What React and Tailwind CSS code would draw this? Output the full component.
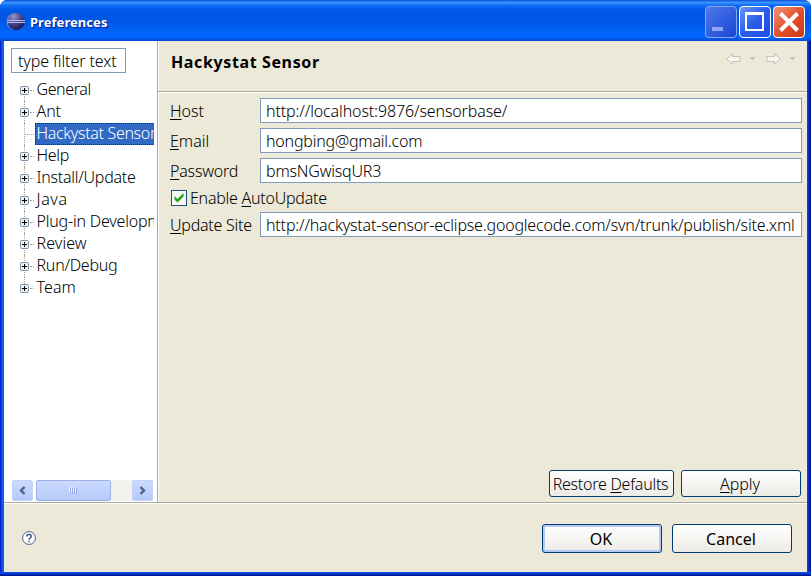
import React from 'react';

const tree = [
  ['General', 'tracking-[-0.4px]'],
  ['Ant', 'tracking-[-0.1px]'],
  ['Hackystat Sensor', 'tracking-[-0.33px]'],
  ['Help', 'tracking-[-0.3px]'],
  ['Install/Update', 'tracking-[-0.25px]'],
  ['Java', 'tracking-[0.6px]'],
  ['Plug-in Developm', 'tracking-[-0.2px]'],
  ['Review', 'tracking-[0.1px]'],
  ['Run/Debug', 'tracking-[-0.25px]'],
  ['Team', 'tracking-[0.1px]'],
];

function EclipseLogo() {
  return (
    <svg width="20" height="20" viewBox="0 0 20 20" className="shrink-0">
      <defs>
        <radialGradient id="orb" cx="0.35" cy="0.2" r="0.85">
          <stop offset="0" stopColor="#9a96c8" />
          <stop offset="0.5" stopColor="#4a4590" />
          <stop offset="1" stopColor="#15124f" />
        </radialGradient>
      </defs>
      <circle cx="9.200" cy="9.500" r="8.6" fill="#7f86d6" />
      <circle cx="10.2" cy="9.500" r="8.6" fill="url(#orb)" />
      <path d="M1.5 8.5h17.4M1.2 10.5h17.8" stroke="#b9bdea" strokeWidth="1" />
    </svg>
  );
}

function CaptionButton({ tone, children }) {
  return (
    <span className={`flex h-8 w-8 items-center justify-center rounded-[4px] border ${tone}`}>
      <svg width="30" height="30" viewBox="0 0 30 30">{children}</svg>
    </span>
  );
}

function Expander() {
  return (
    <svg width="9" height="9" viewBox="0 0 9 9" className="relative z-10">
      <rect x="0.5" y="0.5" width="8" height="8" rx="1" fill="#efede6" stroke="#7b92ad" />
      <path d="M2 4.5h5M4.5 2v5" stroke="#000" />
    </svg>
  );
}

function TreeRow({ name, spacing, index }) {
  const selected = index === 2;
  const last = index === tree.length - 1;
  return (
    <li className="flex h-[22px] items-center pl-4">
      <span className="relative flex h-[22px] w-[15px] shrink-0 items-center">
        <span
          className={`absolute left-1 w-px border-l border-dotted border-[#a6a394] ${index === 0 ? 'top-[11px] h-[11px]' : last ? 'top-0 h-[11px]' : 'top-0 h-[22px]'}`}
        />
        {!selected && <Expander />}
        <span className={`mt-px h-px border-t border-dotted border-[#a6a394] ${selected ? 'ml-1 w-[10px]' : 'ml-px w-1'}`} />
      </span>
      <span
        className={`flex h-[22px] flex-1 items-center overflow-hidden whitespace-pre pb-[2px] ${spacing} ${selected ? 'border border-r-0 border-dotted border-[#1c2a44] bg-[#316ac5] pl-[0.5px] text-white' : 'pl-[1.5px]'}`}
      >
        {name}
      </span>
    </li>
  );
}

function Field({ label, value, labelClass, valueClass, gap }) {
  return (
    <div className={`flex h-[25px] items-center ${gap}`}>
      <label className={`w-[90px] shrink-0 whitespace-nowrap ${labelClass}`}>
        <u className="underline underline-offset-2">{label[0]}</u>
        {label.slice(1)}
      </label>
      <div className={`flex h-[25px] min-w-0 flex-1 items-center whitespace-nowrap border border-[#7f9db9] bg-white pl-[5px] ${valueClass}`}>
        {value}
      </div>
    </div>
  );
}

function ScrollButton({ d }) {
  return (
    <span className="flex h-[21px] w-[21px] items-center justify-center rounded-[2px] border border-[#c3d2f8] bg-gradient-to-b from-[#cbdafd] to-[#b5c9fa]">
      <svg width="9" height="9" viewBox="0 0 9 9">
        <path d={d} fill="none" stroke="#4d6185" strokeWidth="2.400" />
      </svg>
    </span>
  );
}

const button =
  'flex items-center justify-center whitespace-nowrap rounded-[3px] border border-[#003c74] bg-gradient-to-b from-white to-[#ecebe6]';

export default function App() {
  return (
    <div className="flex h-[576px] w-[811px] flex-col overflow-hidden rounded-t-[7px] bg-[linear-gradient(90deg,#0019cf_0px,#0831d9_1px,#166aee_3px,#0855dd_4px,#0855dd_807px,#0831d9_808px,#001ea0_810px,#00138c_811px)] font-['Noto_Sans','Open_Sans',sans-serif] text-[16px] font-light leading-[20px] text-black">
      <header className="flex h-[41px] shrink-0 items-center bg-[linear-gradient(180deg,#0a4fd6_0%,#3a93ff_6%,#0a6af4_14%,#0058e6_25%,#0056e4_50%,#0064fa_78%,#0066ff_90%,#0049cf_100%)] pl-[6px] pr-[6px] pt-[3px]">
        <EclipseLogo />
        <h1 className="ml-1 flex-1 font-['Noto_Sans',sans-serif] text-[13px] font-bold tracking-[0.05px] text-white [text-shadow:1px_1px_1px_#0a1883]">
          Preferences
        </h1>
        <div className="flex gap-[2px]">
          <CaptionButton tone="border-[#86a6ee] bg-gradient-to-br from-[#4f78ea] to-[#1745d4]">
            <path d="M6 20h11v4H6z" fill="#8ca6f3" />
          </CaptionButton>
          <CaptionButton tone="border-white bg-gradient-to-br from-[#6d93f5] via-[#2a5cec] to-[#1a4ee0]">
            <path d="M6 7h17v16h-17z" fill="none" stroke="#fff" strokeWidth="2" />
            <path d="M5 6.500h19" stroke="#fff" strokeWidth="3" />
          </CaptionButton>
          <CaptionButton tone="border-white bg-gradient-to-br from-[#ee9377] via-[#e2512c] to-[#c93a12]">
            <path d="M6.500 6.500l17 17M23.500 6.500l-17 17" stroke="#fff" strokeWidth="4" />
          </CaptionButton>
        </div>
      </header>

      <div className="mx-1 flex h-[531px] shrink-0 flex-col bg-[#ece9d8]">
        <main className="flex h-[461px] shrink-0">
          <aside className="flex w-[153px] shrink-0 flex-col overflow-hidden bg-white pr-[3px]">
            <div className="ml-[7px] mt-[7px] flex h-[25px] w-[115px] shrink-0 items-center whitespace-nowrap border border-[#7f9db9] pl-[6px] tracking-[-0.1px]">
              type filter text
            </div>
            <ul className="mt-[6px] flex-1">
              {tree.map(([name, spacing], i) => (
                <TreeRow key={name} name={name} spacing={spacing} index={i} />
              ))}
            </ul>
            <div className="mb-px ml-2 mr-px flex h-[21px] justify-between bg-[#f3f1ec]">
              <div className="flex gap-[3px] bg-white">
                <ScrollButton d="M6.500 1L3 4.500L6.500 8" />
                <span className="flex h-[21px] w-[75px] items-center justify-center gap-px rounded-[2px] border border-[#98b1e9] bg-gradient-to-b from-[#cbdafd] to-[#b5c9fa]">
                  {[0, 1, 2, 3].map((i) => (
                    <i key={i} className="h-[6px] w-px bg-[#8da5e6] shadow-[-1px_-1px_0_#eef4fe]" />
                  ))}
                </span>
              </div>
              <ScrollButton d="M2.500 1L6 4.500L2.500 8" />
            </div>
          </aside>

          <section className="flex min-w-0 flex-1 flex-col border-l border-[#aca899] shadow-[inset_1px_0_0_#fff]">
            <div className="flex h-[51px] shrink-0 items-center justify-between border-b border-[#aca899] pl-[13px] pr-[11px] shadow-[0_1px_0_#fff]">
              <h2 className="mt-[-8px] text-[16px] font-bold tracking-[0.62px]">Hackystat Sensor</h2>
              <svg width="70" height="14" viewBox="0 0 70 14" className="mt-[-14px]">
                <g fill="#f6f5ef" stroke="#c4c1b5">
                  <path d="M0.800 7L6.500 1.500V4.500H14V9.500H6.500V12.500z" />
                  <path d="M54.200 7L48.500 1.500V4.500H41V9.500H48.500V12.500z" />
                </g>
                <path d="M23.500 5h6l-3 3.500zM63.500 5h6l-3 3.500z" fill="#c4c1b5" />
              </svg>
            </div>
            <form className="flex flex-1 flex-col pl-3 pr-[5px] pt-[6px]">
              <Field label="Host" value="http://localhost:9876/sensorbase/" gap="mb-[5px]" labelClass="" valueClass="tracking-[-0.12px]" />
              <Field label="Email" value="hongbing@gmail.com" gap="mb-[5px]" labelClass="" valueClass="tracking-[-0.2px]" />
              <Field label="Password" value="bmsNGwisqUR3" gap="" labelClass="tracking-[-0.2px]" valueClass="tracking-[-0.2px]" />
              <label className="flex h-[29px] items-center whitespace-nowrap tracking-[-0.25px]">
                <svg width="16" height="16" viewBox="0 0 16 16" className="ml-px mr-[3px]">
                  <rect x="0.500" y="0.500" width="15" height="15" fill="#f7f7f4" stroke="#1c5180" />
                  <path d="M3.500 6V9.500L6.500 12.500L12.500 6.500V3L6.500 9z" fill="#21a121" />
                </svg>
                <span>
                  Enable <u className="underline underline-offset-2">A</u>utoUpdate
                </span>
              </label>
              <Field
                label="Update Site"
                value="http://hackystat-sensor-eclipse.googlecode.com/svn/trunk/publish/site.xml"
                gap=""
                labelClass="tracking-[-0.25px]"
                valueClass="tracking-[-0.18px]"
              />
              <div className="mb-[5px] mt-auto flex justify-end gap-[7px] pr-px">
                <button type="button" className={`${button} h-[27px] w-[125px] pr-[2px] tracking-[-0.25px]`}>
                  <span>
                    Restore <u className="underline underline-offset-2">D</u>efaults
                  </span>
                </button>
                <button type="button" className={`${button} h-[27px] w-[120px] pr-[2px]`}>
                  <span>
                    <u className="underline underline-offset-2">A</u>pply
                  </span>
                </button>
              </div>
            </form>
          </section>
        </main>

        <footer className="flex h-[70px] items-center border-t border-[#aca899] pl-[18px] pr-[15px] shadow-[inset_0_1px_0_#fff]">
          <svg width="14" height="14" viewBox="0 0 14 14">
            <circle cx="7" cy="7" r="6.400" fill="#fff" stroke="#4d5c8d" />
            <path d="M4.800 5.400C4.800 2.700 9.300 2.700 9.300 5.300C9.300 6.900 7.100 6.800 7.100 8.700M7.100 9.800V11.300" fill="none" stroke="#4d5c8d" strokeWidth="1.600" />
          </svg>
          <div className="ml-auto mt-px flex gap-[10px] font-normal">
            <button type="button" className={`${button} h-[29px] w-[120px] pr-[2px] pt-px shadow-[inset_0_0_0_2px_#b3c9f3]`}>OK</button>
            <button type="button" className={`${button} h-[29px] w-[120px] pr-[2px] pt-px`}>Cancel</button>
          </div>
        </footer>
      </div>
      <div className="h-1 shrink-0 bg-[linear-gradient(180deg,#0855dd,#0441d8_40%,#001ea0_75%,#00138c)]" />
    </div>
  );
}
